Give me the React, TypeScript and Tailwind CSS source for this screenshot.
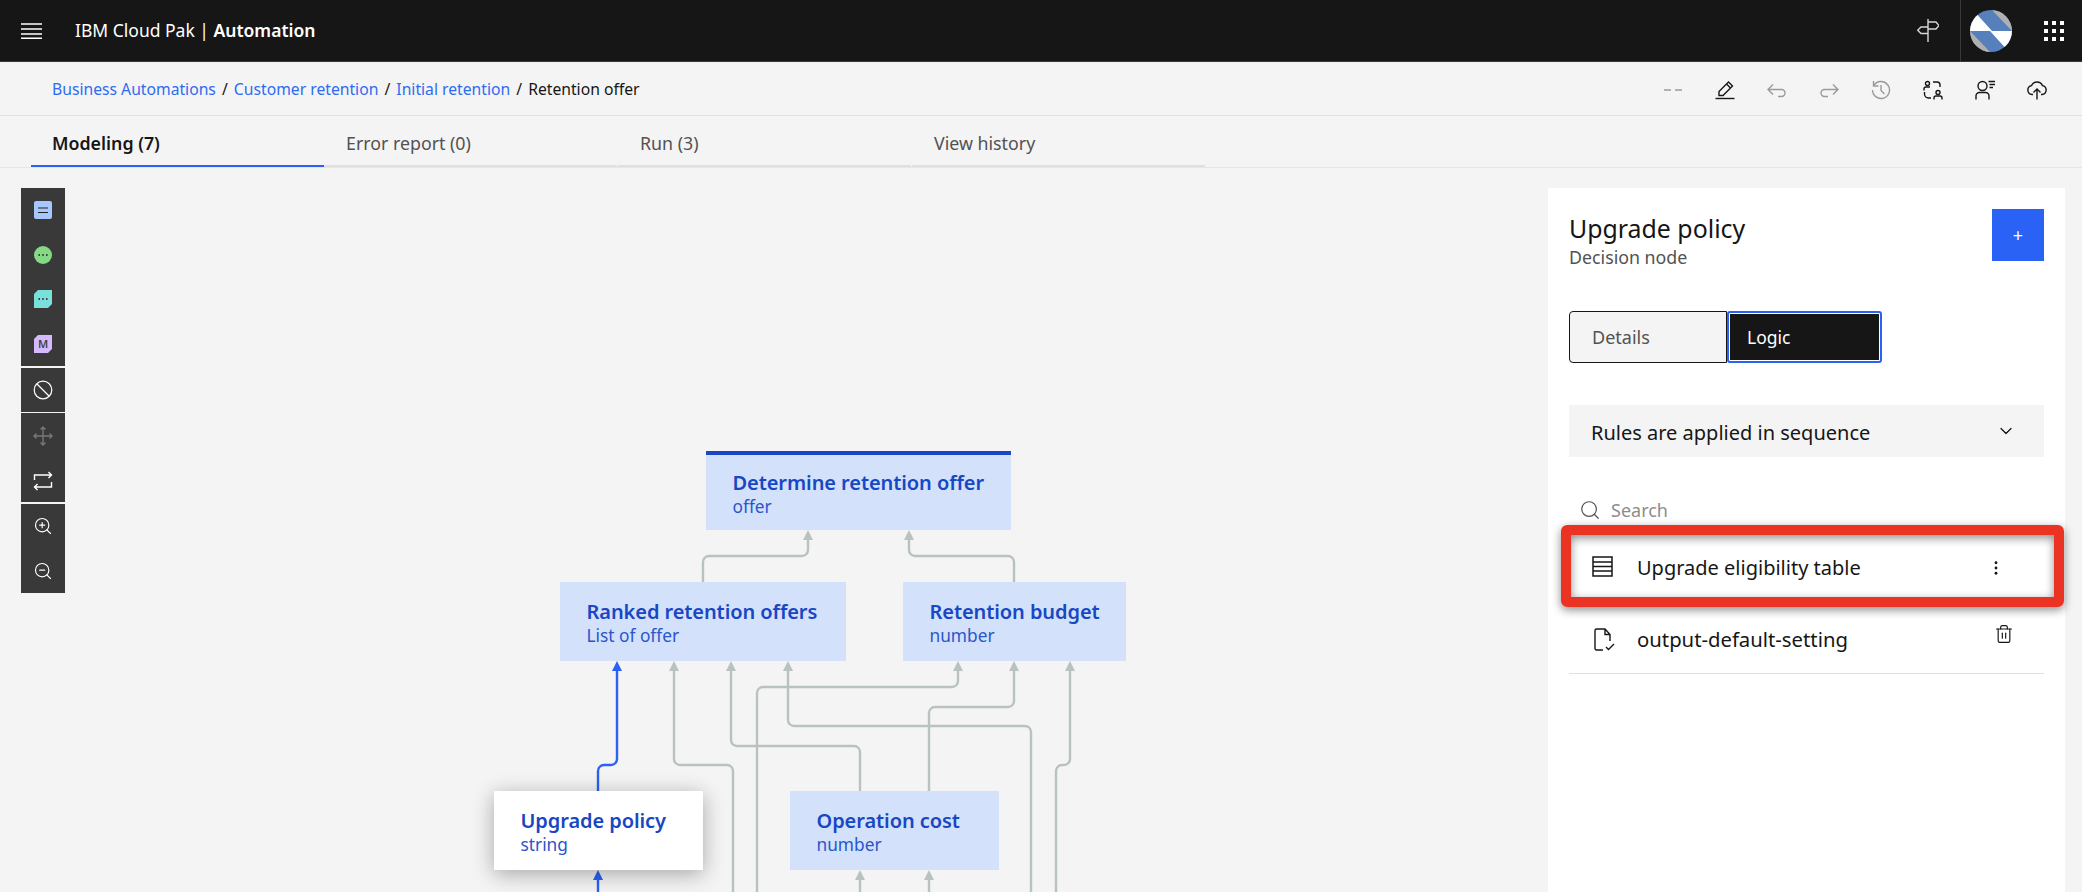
import { ChevronDown, Search, Trash2, ZoomIn, ZoomOut } from "lucide-react";

const FONT = "font-['Noto_Sans',sans-serif]";

const grayEdges = [
  "M703 582V562a6 6 0 0 1 6-6H802a6 6 0 0 0 6-6V536",
  "M1014 582V562a6 6 0 0 0-6-6H915a6 6 0 0 1-6-6V536",
  "M674 667V759a6 6 0 0 0 6 6H727a6 6 0 0 1 6 6V892",
  "M731 667V740a6 6 0 0 0 6 6H854a6 6 0 0 1 6 6V791",
  "M788 667V720a6 6 0 0 0 6 6H1025a6 6 0 0 1 6 6V892",
  "M958 667V681a6 6 0 0 1-6 6H763a6 6 0 0 0-6 6V892",
  "M1014 667V701a6 6 0 0 1-6 6H935a6 6 0 0 0-6 6V791",
  "M1070 667V759a6 6 0 0 1-6 6H1062a6 6 0 0 0-6 6V892",
  "M860 876V892",
  "M929 876V892",
];
const grayArrows = [
  [808, 530],
  [909, 530],
  [674, 661],
  [731, 661],
  [788, 661],
  [958, 661],
  [1014, 661],
  [1070, 661],
  [860, 870],
  [929, 870],
];

function Node({ title, sub, className }: { title: string; sub: string; className: string }) {
  return (
    <div className={`absolute flex h-[79px] flex-col justify-center pt-px pl-[26.5px] ${className}`}>
      <div className="text-[20px] leading-[27px] font-semibold tracking-[-0.08px] whitespace-nowrap text-[#1847c4]">{title}</div>
      <div className="text-[17.3px] leading-[22px] whitespace-nowrap text-[#2a55cc]">{sub}</div>
    </div>
  );
}

function TopIcon({ children, muted }: { children: React.ReactNode; muted?: boolean }) {
  return (
    <svg
      viewBox="0 0 20 20"
      fill="none"
      stroke="currentColor"
      strokeWidth="1.4"
      className={`h-[20px] w-[20px] ${muted ? "text-[#9a9a9a]" : "text-[#161616]"}`}
    >
      {children}
    </svg>
  );
}

function ToolGroup({ children, className }: { children: React.ReactNode; className: string }) {
  return <div className={`flex w-[44px] flex-col items-center bg-[#393939] ${className}`}>{children}</div>;
}

function Slash() {
  return <span className="mx-[2px]"> / </span>;
}

export default function App() {
  return (
    <div className={`flex h-[892px] flex-col overflow-hidden bg-[#f4f4f4] ${FONT}`}>
      <header className="flex h-[62px] shrink-0 items-center border-b border-[#393939] bg-[#161616] text-white">
        <svg viewBox="0 0 21 16" className="ml-[21px] h-[16px] w-[21px]" stroke="#fff" strokeWidth="1.5">
          <path d="M0 1H21M0 6H21M0 11H21M0 15.2H21" />
        </svg>
        <div className="ml-[33px] text-[17.5px] whitespace-nowrap">
          IBM Cloud Pak | <span className="font-semibold">Automation</span>
        </div>
        <svg viewBox="0 0 22 23" fill="none" stroke="#d8d8d8" strokeWidth="1.4" className="mr-[21px] ml-auto h-[23px] w-[22px]">
          <path d="M11 0V23M11 3H19L22 6.5L19 10H11M11 8H4L0.7 11.2L4 14.5H11" />
        </svg>
        <div className="h-[61px] w-px bg-[#393939]" />
        <svg viewBox="0 0 42 42" className="ml-[9px] h-[42px] w-[42px]">
          <clipPath id="avatar">
            <circle cx="21" cy="21" r="21" />
          </clipPath>
          <g clipPath="url(#avatar)">
            <rect width="42" height="42" fill="#5580bb" />
            <path d="M0 0H3L22 21H0Z" fill="#fff" />
            <path d="M22 0H42V21Z" fill="#b0b0b0" />
            <path d="M42 42H39L20 21H42Z" fill="#fff" />
            <path d="M20 42H0V21Z" fill="#b0b0b0" />
          </g>
        </svg>
        <div className="mr-[18px] ml-[32px] grid w-[20px] grid-cols-3 gap-[4px]">
          {Array.from({ length: 9 }).map((_, i) => (
            <div key={i} className="h-[4px] w-[4px] bg-white" />
          ))}
        </div>
      </header>

      <div className="flex h-[54px] shrink-0 items-center border-b border-[#e0e0e0] pt-[2px] pr-[35px] pl-[52px]">
        <div className="text-[15.7px] whitespace-nowrap text-[#161616]">
          <span className="text-[#2f6bf2]">Business Automations</span>
          <Slash />
          <span className="text-[#2f6bf2]">Customer retention</span>
          <Slash />
          <span className="text-[#2f6bf2]">Initial retention</span>
          <Slash />
          Retention offer
        </div>
        <div className="ml-auto flex items-center gap-[32px]">
          <TopIcon muted>
            <path d="M1 10H8M12 10H19" strokeWidth="1.6" />
          </TopIcon>
          <TopIcon>
            <path d="M0.5 18.5H19.5" />
            <path d="M4 15.5V11.5L13.5 2L17.5 6L8 15.5H4ZM11.5 4L15.5 8" />
          </TopIcon>
          <TopIcon muted>
            <path d="M6 4.5L1 9.5L6 14.5M1 9.5H14.5a3.5 3.5 0 0 1 0 7H11" />
          </TopIcon>
          <TopIcon muted>
            <path d="M14 4.5L19 9.5L14 14.5M19 9.5H5.5a3.5 3.5 0 0 0 0 7H9" />
          </TopIcon>
          <TopIcon muted>
            <path d="M2.5 1V6H7.5M2.8 5.5A8.5 8.5 0 1 1 1.5 10M10 5V10.5L13.5 14" />
          </TopIcon>
          <TopIcon>
            <circle cx="4.5" cy="3.5" r="2" />
            <path d="M1 10.5V9a2 2 0 0 1 2-2H7M10 2H14a3 3 0 0 1 3 3V7M1.5 12V14a4 4 0 0 0 4 4H8" />
            <circle cx="15" cy="12.5" r="2" />
            <path d="M11 19.5V18a2 2 0 0 1 2-2H17a2 2 0 0 1 2 2V19.5" />
          </TopIcon>
          <TopIcon>
            <circle cx="7.5" cy="6" r="4.5" />
            <path d="M1 19.5V16a3.5 3.5 0 0 1 3.5-3.5H10.5A3.5 3.5 0 0 1 14 16V19.5M13.5 1.5H20M14.5 4.5H20M14.5 7.5H18" />
          </TopIcon>
          <TopIcon>
            <path d="M6 14.5H5A4.5 4.5 0 0 1 4.5 5.6A6 6 0 0 1 15.5 5.6A4.5 4.5 0 0 1 15 14.5H14" />
            <path d="M10 19.5V9M6.5 12.5L10 9L13.5 12.5" />
          </TopIcon>
        </div>
      </div>

      <div className="flex h-[52px] shrink-0 border-b border-[#e5e5e5] pl-[31px] text-[17.8px]">
        <div className="flex h-[51px] w-[293px] items-center border-b-2 border-[#2962f4] pt-[5px] pl-[21px] font-semibold text-[#161616]">Modeling (7)</div>
        <div className="flex h-[51px] w-[293px] items-center border-b-2 border-[#e0e0e0] pt-[5px] pl-[22px] text-[#525252]">Error report (0)</div>
        <div className="ml-px flex h-[51px] w-[293px] items-center border-b-2 border-[#e0e0e0] pt-[5px] pl-[22px] text-[#525252]">Run (3)</div>
        <div className="ml-px flex h-[51px] w-[293px] items-center border-b-2 border-[#e0e0e0] pt-[5px] pl-[22px] text-[#525252]">View history</div>
      </div>

      <main className="flex min-h-0 flex-1">
        <div className="relative min-w-0 flex-1">
          <div className="absolute top-[20px] left-[21px] flex flex-col gap-[1.5px]">
            <ToolGroup className="h-[178px] gap-[26.7px] pt-[13px]">
              <svg viewBox="0 0 18 18" className="h-[18px] w-[18px]">
                <rect width="18" height="18" rx="2" fill="#a6c8ff" />
                <path d="M4 7H14M4 11.5H14" stroke="#222" strokeWidth="1.2" />
              </svg>
              <svg viewBox="0 0 18 18" className="h-[18px] w-[18px]">
                <circle cx="9" cy="9" r="9" fill="#85d885" />
                <path d="M4.5 9H5.9M8.3 9H9.7M12.1 9H13.5" stroke="#2a3a2a" strokeWidth="2" />
              </svg>
              <svg viewBox="0 0 18 18" className="h-[18px] w-[18px]">
                <path d="M4 0H18V14L14 18H0V4Z" fill="#7ae0da" />
                <path d="M4.5 9H5.9M8.3 9H9.7M12.1 9H13.5" stroke="#2a3a3a" strokeWidth="2" />
              </svg>
              <svg viewBox="0 0 18 18" className="h-[18px] w-[18px]">
                <path d="M4 0H18V14L14 18H0V4Z" fill="#d4bbff" />
                <text x="9" y="13" textAnchor="middle" fontSize="11" fontWeight="600" fill="#444">
                  M
                </text>
              </svg>
            </ToolGroup>
            <ToolGroup className="h-[44px] justify-center">
              <svg viewBox="0 0 20 20" fill="none" stroke="#fff" strokeWidth="1.2" className="h-[20px] w-[20px]">
                <circle cx="10" cy="10" r="8.8" />
                <path d="M4 4L16 16" />
              </svg>
            </ToolGroup>
            <ToolGroup className="h-[89px] gap-[25px] pt-[13px]">
              <svg viewBox="0 0 20 20" fill="none" stroke="#777" strokeWidth="1.4" className="h-[20px] w-[20px]">
                <path d="M10 1V19M1 10H19M7.5 3.5L10 1L12.5 3.5M7.5 16.5L10 19L12.5 16.5M3.5 7.5L1 10L3.5 12.5M16.5 7.5L19 10L16.5 12.5" />
              </svg>
              <svg viewBox="0 0 20 20" fill="none" stroke="#fff" strokeWidth="1.4" className="h-[20px] w-[20px]">
                <path d="M1.5 9V4H18.5M15.5 1L18.5 4L15.5 7M18.5 11V16H1.5M4.5 13L1.5 16L4.5 19" />
              </svg>
            </ToolGroup>
            <ToolGroup className="h-[89px] gap-[25px] pt-[12px]">
              <ZoomIn size={20} strokeWidth={1.4} color="#fff" />
              <ZoomOut size={20} strokeWidth={1.4} color="#fff" />
            </ToolGroup>
          </div>

          <svg viewBox="0 168 1548 724" fill="none" className="absolute top-0 left-0 h-[724px] w-[1548px]">
            {grayEdges.map((d) => (
              <path key={d} d={d} stroke="#b8c2be" strokeWidth="2.4" />
            ))}
            {grayArrows.map(([x, y]) => (
              <path key={`${x}-${y}`} d={`M${x} ${y}L${x + 5} ${y + 10}H${x - 5}Z`} fill="#b8c2be" />
            ))}
            <path d="M598 791V771a6 6 0 0 1 6-6H611a6 6 0 0 0 6-6V667" stroke="#2962f4" strokeWidth="2.4" />
            <path d="M617 661L622 671H612Z" fill="#2962f4" />
            <path d="M598 876V892" stroke="#2962f4" strokeWidth="2.4" />
            <path d="M598 870L603 880H593Z" fill="#2962f4" />
          </svg>

          <Node title="Determine retention offer" sub="offer" className="top-[283px] left-[706px] w-[305px] border-t-4 border-[#1a47c8] bg-[#d3e1fb]" />
          <Node title="Ranked retention offers" sub="List of offer" className="top-[414px] left-[560px] w-[286px] bg-[#d3e1fb]" />
          <Node title="Retention budget" sub="number" className="top-[414px] left-[903px] w-[223px] bg-[#d3e1fb]" />
          <Node title="Upgrade policy" sub="string" className="top-[623px] left-[494px] w-[209px] bg-white shadow-[0_4px_20px_rgba(0,0,0,0.32)]" />
          <Node title="Operation cost" sub="number" className="top-[623px] left-[790px] w-[209px] bg-[#d3e1fb]" />
        </div>

        <aside className="relative mt-[20px] mr-[17px] w-[517px] shrink-0 bg-white px-[21px] pt-[21px]">
          <div className="flex h-[52px] items-start justify-between">
            <div>
              <div className="mt-[2px] text-[24.9px] leading-[34px] text-[#161616]">Upgrade policy</div>
              <div className="text-[17.8px] leading-[24px] text-[#525252]">Decision node</div>
            </div>
            <div className="flex h-[52px] w-[52px] items-center justify-center bg-[#2962f4] text-[18px] leading-none text-white">+</div>
          </div>

          <div className="mt-[50px] flex h-[52px] w-[313px] text-[18px]">
            <div className="flex w-[158px] items-center rounded-l-[4px] border border-[#161616] bg-[#f4f4f4] pl-[22px] text-[#525252]">Details</div>
            <div className="flex flex-1 items-center rounded-[3px] border-2 border-[#2962f4] bg-white p-px">
              <div className="flex h-full w-full items-center bg-[#161616] pl-[17px] text-[17.5px] text-white">Logic</div>
            </div>
          </div>

          <div className="mt-[42px] flex h-[52px] items-center justify-between bg-[#f4f4f4] pt-[3px] pr-[28px] pl-[22px] text-[20px] text-[#161616]">
            Rules are applied in sequence
            <ChevronDown size={20} strokeWidth={1.5} className="mb-[3px]" />
          </div>

          <div className="mt-[27px] flex h-[52px] items-center pl-[10px] text-[18px] text-[#8d8d8d]">
            <Search size={22} strokeWidth={1.3} color="#525252" />
            <span className="ml-[10px]">Search</span>
          </div>

          <div className="flex h-[64px] items-center pr-[46px] pl-[23px] text-[20px] text-[#161616]">
            <svg viewBox="0 0 21 21" fill="none" stroke="#161616" strokeWidth="1.5" className="mb-[3px] h-[21px] w-[21px]">
              <path d="M1 1H20V20H1ZM1 6H20M1 10.5H20M1 15H20" />
            </svg>
            <span className="ml-[24px]">Upgrade eligibility table</span>
            <svg viewBox="0 0 4 16" className="ml-auto h-[14px] w-[4px]" fill="#161616">
              <circle cx="2" cy="2" r="1.6" />
              <circle cx="2" cy="8" r="1.6" />
              <circle cx="2" cy="14" r="1.6" />
            </svg>
          </div>

          <div className="flex h-[74px] items-center border-b border-[#e0e0e0] pt-[6px] pr-[30px] pl-[25px] text-[20.3px] text-[#161616]">
            <svg viewBox="0 0 21 23" fill="none" stroke="#161616" strokeWidth="1.4" className="h-[23px] w-[21px]">
              <path d="M9 22H2.5a1.5 1.5 0 0 1-1.5-1.5V2.5A1.5 1.5 0 0 1 2.5 1H11L16 6.5V13M11 1V6.5H16M12 19L14.5 21.5L20 16" />
            </svg>
            <span className="ml-[22px]">output-default-setting</span>
            <Trash2 size={20} strokeWidth={1.4} className="mb-[12px] ml-auto" />
          </div>

          <div className="absolute top-[337px] left-[13px] h-[82px] w-[503px] rounded-[6px] border-[10px] border-[#ea3323] shadow-[0_3px_10px_rgba(0,0,0,0.45),inset_0_3px_10px_rgba(0,0,0,0.45)]" />
        </aside>
      </main>
    </div>
  );
}
